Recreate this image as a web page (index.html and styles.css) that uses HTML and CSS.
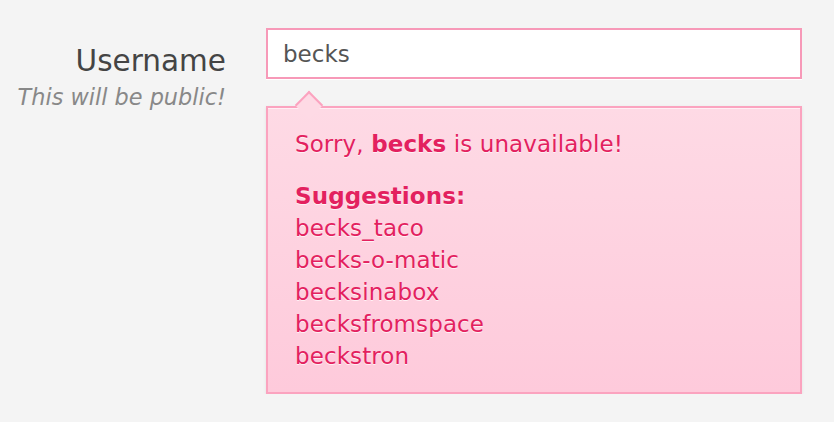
FILE: index.html
```
<!DOCTYPE html>
<html lang="en">
<head>
    <meta charset="UTF-8">
    <meta name="viewport" content="width=device-width, initial-scale=1.0">
    <title>signup</title>
    <link rel="stylesheet" href="styles.css">
</head>
<body>

    <div class="row">
        <div class="label">
            <label for="username">Username</label>
            <em>This will be public!</em>
        </div>

        <div class="field">
            <input id="username" type="text" value="becks">

            <div class="tip">
                <p class="sorry">Sorry, <b>becks</b> is unavailable!</p>
                <b class="title">Suggestions:</b>
                <ul>
                    <li>becks_taco</li>
                    <li>becks-o-matic</li>
                    <li>becksinabox</li>
                    <li>becksfromspace</li>
                    <li>beckstron</li>
                </ul>
            </div>
        </div>
    </div>

</body>
</html>
```

FILE: styles.css
```
* {
    box-sizing: border-box;
}
body {
    margin: 0;
    background: #f4f4f4;
    font-family: "DejaVu Sans", Verdana, sans-serif;
}
.row {
    display: flex;
    padding-top: 28px;
}
.label {
    width: 226px;
    display: flex;
    flex-direction: column;
    align-items: flex-end;
    padding-top: 16px;
}
.label label {
    font-size: 29.5px;
    line-height: 34px;
    color: #444;
}
.label em {
    font-size: 22.4px;
    line-height: 30px;
    margin-top: 4px;
    color: #888;
}
.field {
    margin-left: 40px;
    width: 536px;
}
.field input {
    display: block;
    width: 100%;
    height: 51px;
    border: 2px solid #f799b8;
    background: #fff;
    box-shadow: 0 1px 0 #fff;
    padding: 0 15px;
    font-family: inherit;
    font-size: 23px;
    color: #555;
    outline: none;
}

/* pink box under the field, with a little arrow pointing up */
.tip {
    position: relative;
    margin-top: 27px;
    border: 2px solid #fba3bf;
    background: linear-gradient(#fedae5, #fecadb);
    box-shadow: inset 0 1px 0 #ffeef4, 0 1px 3px rgba(0, 0, 0, 0.08);
    padding: 20px 27px 20px;
    color: #e3215f;
    font-size: 23px;
    letter-spacing: 0.1px;
    line-height: 32px;
    text-shadow: 0 1px 0 #fff0f5;
}
.tip::before {
    content: "";
    position: absolute;
    top: -13px;
    left: 31px;
    width: 18px;
    height: 18px;
    background: #fedae5;
    border-top: 2px solid #fba3bf;
    border-left: 2px solid #fba3bf;
    transform: rotate(45deg);
}
.sorry {
    margin: 0 0 20px;
}
.title {
    display: block;
}
.tip ul {
    list-style: none;
    margin: 0;
    padding: 0;
}
```
